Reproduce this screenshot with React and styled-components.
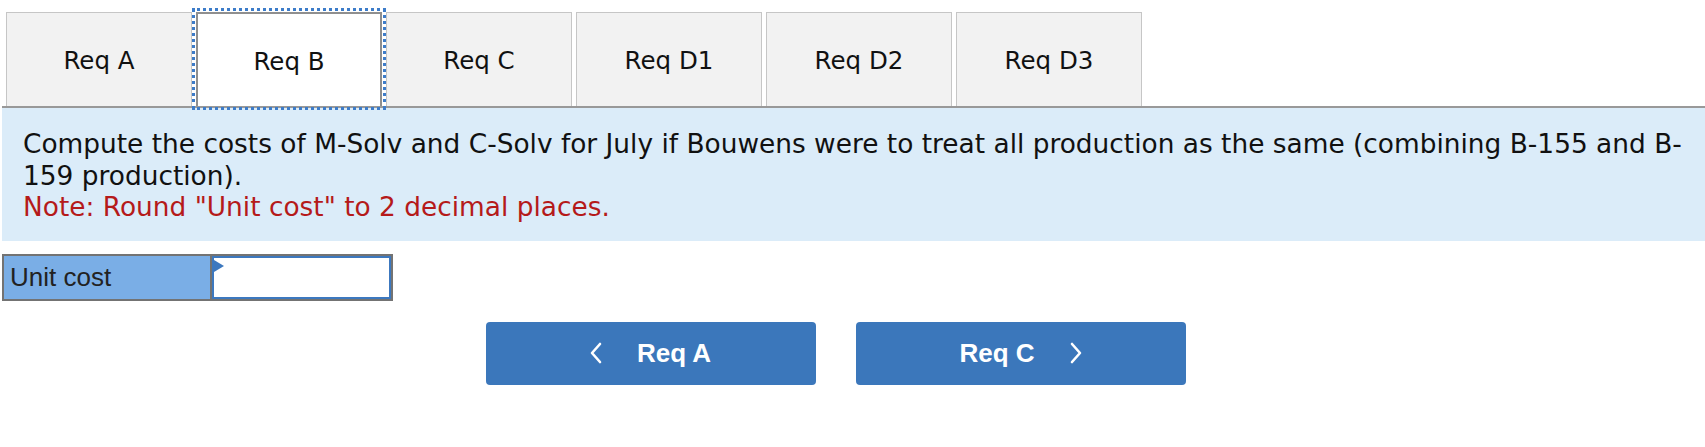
import React from "react";
import styled, { createGlobalStyle } from "styled-components";

const Global = createGlobalStyle`
  html, body { margin: 0; padding: 0; background: #fff; }
  body { font-family: "DejaVu Sans", Verdana, sans-serif; }
`;

const Page = styled.div`
  width: 1705px;
  height: 447px;
  overflow: hidden;
  padding-left: 2px;
  box-sizing: border-box;
`;

const TabBar = styled.div`
  display: flex;
  gap: 4px;
  padding: 12px 0 0 4px;
`;

const Tab = styled.button`
  width: 186px;
  height: 94px;
  box-sizing: border-box;
  margin: 0;
  padding: 2px 0 0;
  border: ${(p) => (p.$active ? "2px solid #8f8f8f" : "1px solid #c6c6c6")};
  border-bottom: none;
  background: ${(p) => (p.$active ? "#ffffff" : "#f2f2f2")};
  font-family: "DejaVu Sans", Verdana, sans-serif;
  font-size: 24.5px;
  color: #111;
  cursor: pointer;
  outline: ${(p) => (p.$active ? "3px dotted #3d7cc9" : "none")};
  outline-offset: 1px;
  position: relative;
  z-index: ${(p) => (p.$active ? 2 : 1)};
`;

const Panel = styled.div`
  border-top: 2px solid #999;
  background: #dbecf9;
  padding: 20px 20px 18px 21px;
  font-size: 26.4px;
  line-height: 31.5px;
  color: #111;
`;

const Note = styled.div`
  color: #b51a1a;
`;

const Row = styled.div`
  display: flex;
  margin-top: 13px;
  height: 47px;
`;

const Label = styled.div`
  width: 210px;
  box-sizing: border-box;
  border: 2px solid #737373;
  background: #7aaee6;
  font-family: "Liberation Sans", Arial, sans-serif;
  font-size: 26px;
  color: #222;
  display: flex;
  align-items: center;
  padding-left: 6px;
`;

const InputCell = styled.div`
  width: 181px;
  box-sizing: border-box;
  border: 2px solid #737373;
  border-left: none;
  position: relative;
  display: flex;
`;

const Input = styled.input`
  flex: 1;
  min-width: 0;
  box-sizing: border-box;
  border: 2px solid #3c78bf;
  margin: 0;
  outline: none;
  background: #fff;
`;

const Marker = styled.span`
  position: absolute;
  left: 2px;
  top: 4px;
  width: 0;
  height: 0;
  border-top: 6px solid transparent;
  border-bottom: 6px solid transparent;
  border-left: 10px solid #3c78bf;
`;

const NavRow = styled.div`
  width: 1667px;
  display: flex;
  justify-content: center;
  gap: 40px;
  margin-top: 21px;
`;

const NavButton = styled.button`
  width: 330px;
  height: 63px;
  border: none;
  border-radius: 4px;
  background: #3b77bb;
  color: #fff;
  font-family: "Liberation Sans", Arial, sans-serif;
  font-weight: bold;
  font-size: 26px;
  display: flex;
  align-items: center;
  justify-content: center;
  gap: 35px;
  cursor: pointer;
`;

const Chevron = ({ dir }) => (
  <svg width="12" height="22" viewBox="0 0 12 22" fill="none">
    <polyline
      points={dir === "left" ? "10,2 2,11 10,20" : "2,2 10,11 2,20"}
      stroke="#fff"
      strokeWidth="2.6"
      strokeLinecap="round"
      strokeLinejoin="round"
    />
  </svg>
);

const tabs = ["Req A", "Req B", "Req C", "Req D1", "Req D2", "Req D3"];

export default function App() {
  return (
    <Page>
      <Global />
      <TabBar>
        {tabs.map((t) => (
          <Tab key={t} $active={t === "Req B"}>
            {t}
          </Tab>
        ))}
      </TabBar>
      <Panel>
        <div>
          Compute the costs of M-Solv and C-Solv for July if Bouwens were to treat all production as the
          same (combining B-155 and B-159 production).
        </div>
        <Note>Note: Round "Unit cost" to 2 decimal places.</Note>
      </Panel>
      <Row>
        <Label>Unit cost</Label>
        <InputCell>
          <Input type="text" />
          <Marker />
        </InputCell>
      </Row>
      <NavRow>
        <NavButton>
          <Chevron dir="left" />
          <span>Req A</span>
        </NavButton>
        <NavButton>
          <span>Req C</span>
          <Chevron dir="right" />
        </NavButton>
      </NavRow>
    </Page>
  );
}
